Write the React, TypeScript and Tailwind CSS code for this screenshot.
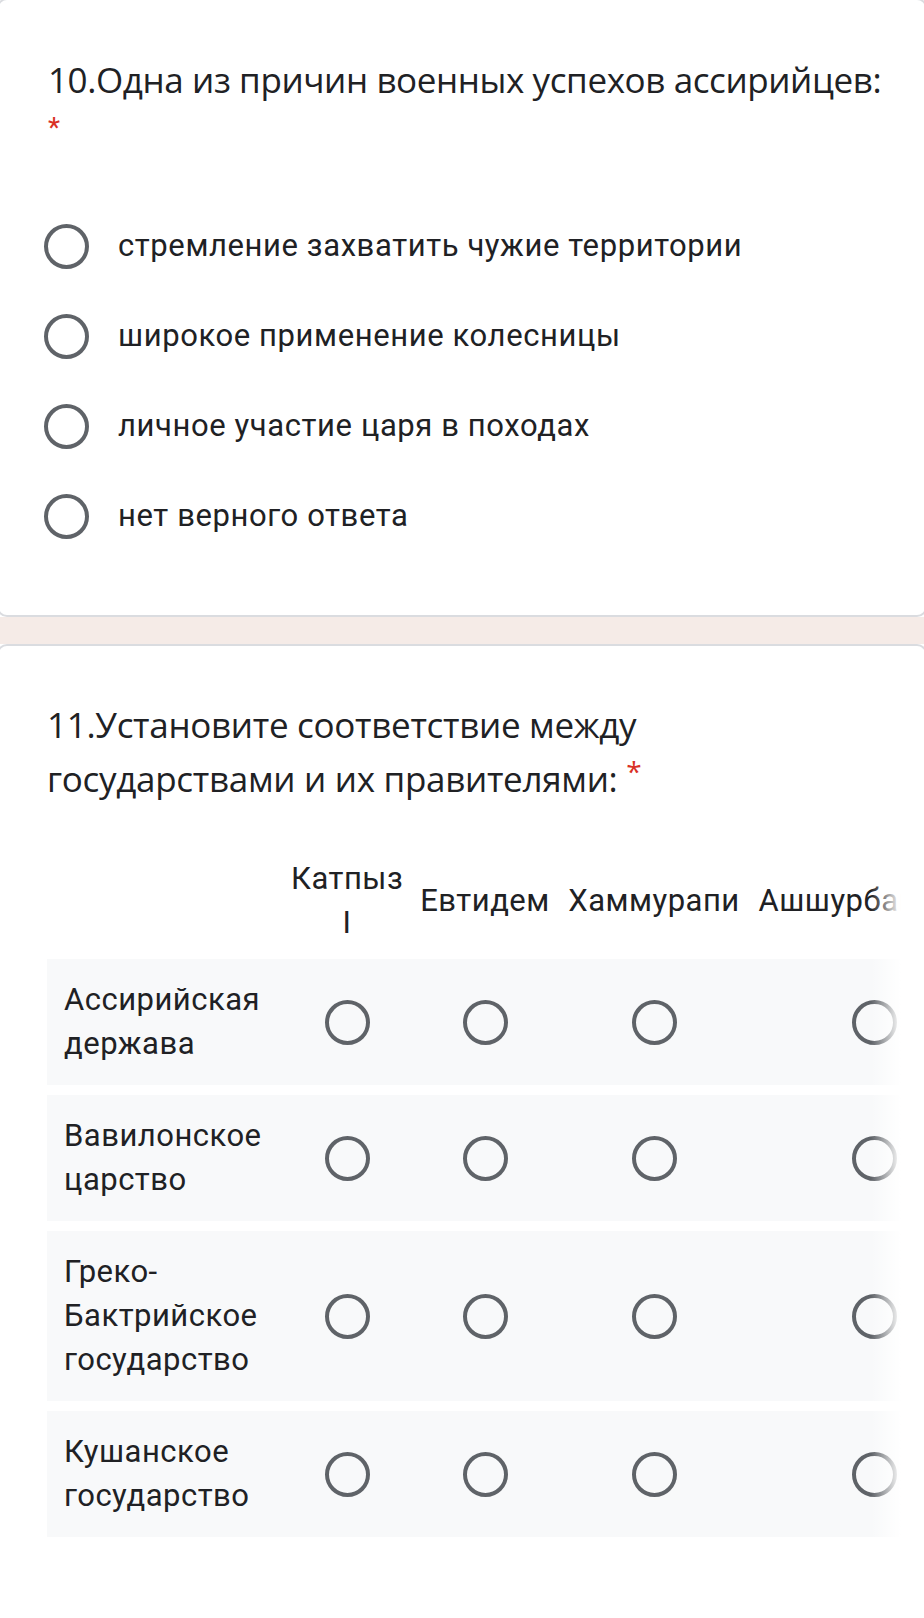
import { type ReactNode } from 'react'

const options = [
  'стремление захватить чужие территории',
  'широкое применение колесницы',
  'личное участие царя в походах',
  'нет верного ответа',
]

const columns = ['Катпыз I', 'Евтидем', 'Хаммурапи', 'Ашшурбанипал']

const rows = [
  ['Ассирийская', 'держава'],
  ['Вавилонское', 'царство'],
  ['Греко-', 'Бактрийское', 'государство'],
  ['Кушанское', 'государство'],
]

const gridCols = 'grid grid-cols-[244px_112px_164px_174px_266px]'

function Radio() {
  return (
    <span className="block h-[45px] w-[45px] shrink-0 rounded-full border-[4px] border-[#5f6368]" />
  )
}

function Card({ children, className }: { children: ReactNode; className?: string }) {
  return (
    <div
      className={`-mx-[3px] rounded-[10px] border-2 border-[#dadce0] bg-white ${className ?? ''}`}
    >
      {children}
    </div>
  )
}

export default function App() {
  return (
    <div className="min-h-[1618px] w-[924px] overflow-hidden bg-white text-[#202124] font-['Roboto',sans-serif]">
      {/* Question 10 */}
      <Card className="-mt-[2px] pb-[54px] pl-[49px] pt-[56px]">
        <div className="whitespace-nowrap font-['Open_Sans',sans-serif] text-[35px] leading-[48px] tracking-[-0.4px]">
          10.Одна из причин военных успехов ассирийцев:
        </div>
        <div className="text-[28px] leading-[48px] text-[#d93025]">*</div>

        <div className="mt-[49px] flex flex-col">
          {options.map((o) => (
            <div key={o} className="-ml-[4px] flex h-[90px] items-center gap-[29px]">
              <Radio />
              <span className="text-[31px] leading-[40px] tracking-[0.6px]">{o}</span>
            </div>
          ))}
        </div>
      </Card>

      <div className="h-[27px] bg-[#f5ebe7]" />

      {/* Question 11 */}
      <Card className="rounded-b-none border-b-0 pb-[85px] pl-[48px] pt-[52px]">
        <div className="font-['Open_Sans',sans-serif] text-[35px] leading-[54px] tracking-[-0.3px]">
          11.Установите соответствие между
          <br />
          государствами и их правителями:{' '}
          <span className="relative -top-[10px] text-[28px] text-[#d93025]">*</span>
        </div>

        <div className="relative mt-[49px] w-[854px] overflow-hidden">
          <div
            className={`${gridCols} h-[88px] items-center text-center text-[31px] leading-[44px] tracking-[0.5px]`}
          >
            <div />
            {columns.map((c, i) => (
              <div key={c} className={i === 0 ? '' : 'whitespace-nowrap'}>
                {c}
              </div>
            ))}
          </div>

          <div className="mt-[14px] flex flex-col gap-[10px]">
            {rows.map((r) => (
              <div
                key={r.join(' ')}
                className={`${gridCols} items-center bg-[#f8f9fa] py-[19px] text-[31px] leading-[44px] tracking-[0.5px]`}
              >
                <div className="pl-[17px]">
                  {r.map((l) => (
                    <div key={l}>{l}</div>
                  ))}
                </div>
                {columns.map((c) => (
                  <div key={c} className="flex justify-center">
                    <Radio />
                  </div>
                ))}
              </div>
            ))}
          </div>

          <div className="pointer-events-none absolute inset-y-0 right-0 w-[30px] bg-gradient-to-r from-white/0 to-white" />
        </div>
      </Card>
    </div>
  )
}
